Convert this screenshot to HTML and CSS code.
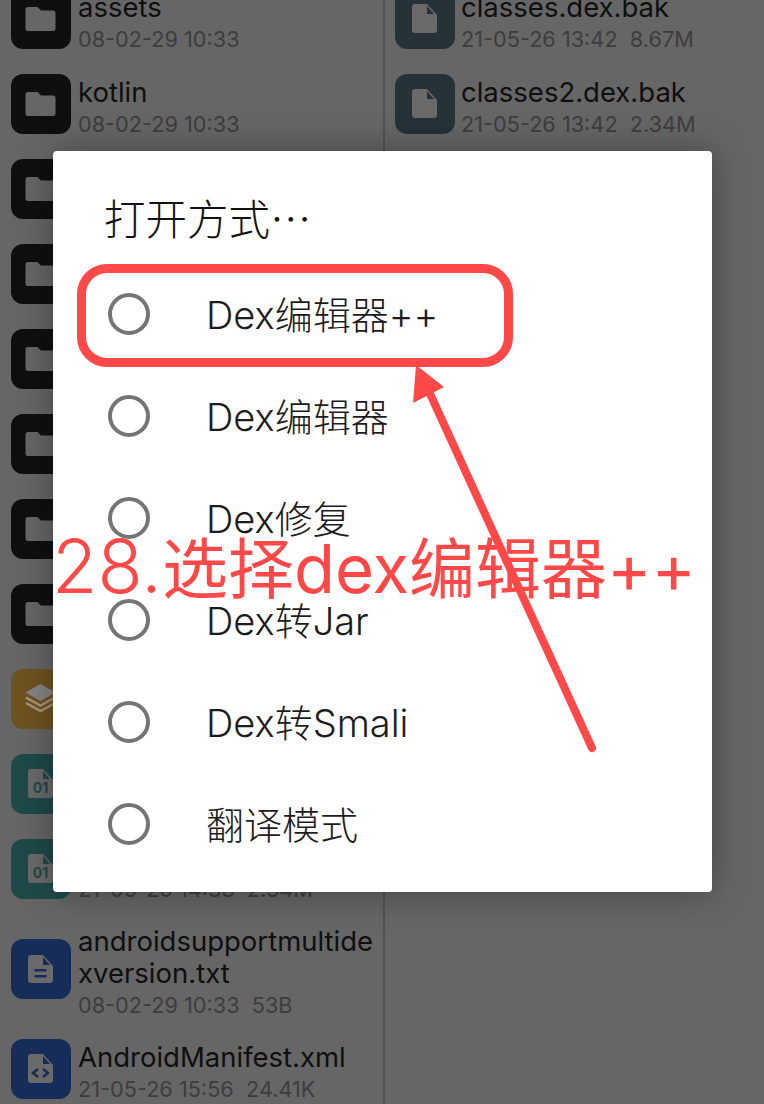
FILE: index.html
```html
<!DOCTYPE html>
<html lang="zh">
<head>
<meta charset="utf-8">
<title>打开方式</title>
<link rel="stylesheet" href="styles.css">
</head>
<body>
<svg class="defs" width="0" height="0" aria-hidden="true">
  <symbol id="folder" viewBox="0 0 60 60"><path d="M17 18h9.500l3.500 3.500h12a2.500 2.500 0 0 1 2.500 2.500v15.500a2.500 2.500 0 0 1-2.500 2.500H17a2.500 2.500 0 0 1-2.500-2.500V20.500a2.500 2.500 0 0 1 2.500-2.500z"/></symbol>
</svg>
<main class="browser">
  <section class="col col-left">
    <div class="row"><span class="icon i-folder"><svg><use href="#folder"/></svg></span><div class="info"><div class="name">assets</div><div class="meta">08-02-29 10:33</div></div></div>
    <div class="row"><span class="icon i-folder"><svg><use href="#folder"/></svg></span><div class="info"><div class="name">kotlin</div><div class="meta">08-02-29 10:33</div></div></div>
    <div class="row"><span class="icon i-folder"><svg><use href="#folder"/></svg></span><div class="info"><div class="name">lib</div><div class="meta">08-02-29 10:33</div></div></div>
    <div class="row"><span class="icon i-folder"><svg><use href="#folder"/></svg></span><div class="info"><div class="name">META-INF</div><div class="meta">08-02-29 10:33</div></div></div>
    <div class="row"><span class="icon i-folder"><svg><use href="#folder"/></svg></span><div class="info"><div class="name">okhttp3</div><div class="meta">08-02-29 10:33</div></div></div>
    <div class="row"><span class="icon i-folder"><svg><use href="#folder"/></svg></span><div class="info"><div class="name">org</div><div class="meta">08-02-29 10:33</div></div></div>
    <div class="row"><span class="icon i-folder"><svg><use href="#folder"/></svg></span><div class="info"><div class="name">res</div><div class="meta">08-02-29 10:33</div></div></div>
    <div class="row"><span class="icon i-folder"><svg><use href="#folder"/></svg></span><div class="info"><div class="name">retrofit2</div><div class="meta">08-02-29 10:33</div></div></div>
    <div class="row"><span class="icon i-stack"><svg viewBox="0 0 60 60"><path class="s-top" d="M29.500 15l15 8.500-15 8.500-15-8.500z"/><path class="s-line" d="M15 28.500l14.500 8 14.500-8M15 34l14.500 8 14.500-8"/></svg></span><div class="info"><div class="name">resources.arsc</div><div class="meta">21-05-26 14:38&nbsp; 3.12M</div></div></div>
    <div class="row"><span class="icon i-dex"><svg viewBox="0 0 60 60"><path class="g" d="M20 15h12l10 11v15a3 3 0 0 1-3 3H20a3 3 0 0 1-3-3V18a3 3 0 0 1 3-3z"/><path class="d" d="M32 17v8h7z"/></svg><b class="bin">01</b></span><div class="info"><div class="name">classes.dex</div><div class="meta">21-05-26 14:38&nbsp; 8.67M</div></div></div>
    <div class="row"><span class="icon i-dex"><svg viewBox="0 0 60 60"><path class="g" d="M20 15h12l10 11v15a3 3 0 0 1-3 3H20a3 3 0 0 1-3-3V18a3 3 0 0 1 3-3z"/><path class="d" d="M32 17v8h7z"/></svg><b class="bin">01</b></span><div class="info"><div class="name">classes2.dex</div><div class="meta">21-05-26 14:38&nbsp; 2.34M</div></div></div>
    <div class="row row-tall"><span class="icon i-doc"><svg viewBox="0 0 60 60"><path class="g" d="M20 16h12l10 11v14a3 3 0 0 1-3 3H20a3 3 0 0 1-3-3V19a3 3 0 0 1 3-3z"/><path class="d" d="M32 18v8h7zM23.500 30h12v2.500h-12zM23.500 36h12v2.500h-12z"/></svg></span><div class="info"><div class="name">androidsupportmultidexversion.txt</div><div class="meta">08-02-29 10:33&nbsp; 53B</div></div></div>
    <div class="row"><span class="icon i-doc"><svg viewBox="0 0 60 60"><path class="g" d="M20 15h12l10 11v15a3 3 0 0 1-3 3H20a3 3 0 0 1-3-3V18a3 3 0 0 1 3-3z"/><path class="d" d="M32 17v8h7z"/><path class="c" d="M27 30l-5 4 5 4M32 30l5 4-5 4"/></svg></span><div class="info"><div class="name">AndroidManifest.xml</div><div class="meta">21-05-26 15:56&nbsp; 24.41K</div></div></div>
  </section>
  <section class="col col-right">
    <div class="row"><span class="icon i-bak"><svg viewBox="0 0 60 60"><path class="g" d="M20 15h12l10 11v15a3 3 0 0 1-3 3H20a3 3 0 0 1-3-3V18a3 3 0 0 1 3-3z"/><path class="d" d="M32 17v8h7z"/></svg></span><div class="info"><div class="name">classes.dex.bak</div><div class="meta">21-05-26 13:42&nbsp; 8.67M</div></div></div>
    <div class="row"><span class="icon i-bak"><svg viewBox="0 0 60 60"><path class="g" d="M20 15h12l10 11v15a3 3 0 0 1-3 3H20a3 3 0 0 1-3-3V18a3 3 0 0 1 3-3z"/><path class="d" d="M32 17v8h7z"/></svg></span><div class="info"><div class="name">classes2.dex.bak</div><div class="meta">21-05-26 13:42&nbsp; 2.34M</div></div></div>
  </section>
</main>

<div class="dialog">
  <h1 class="dialog-title">打开方式…</h1>
  <ul class="options">
    <li class="option"><span class="radio"></span>Dex编辑器++</li>
    <li class="option"><span class="radio"></span>Dex编辑器</li>
    <li class="option"><span class="radio"></span>Dex修复</li>
    <li class="option"><span class="radio"></span>Dex转Jar</li>
    <li class="option"><span class="radio"></span>Dex转Smali</li>
    <li class="option"><span class="radio"></span>翻译模式</li>
  </ul>
</div>

<div class="mark-box"></div>
<svg class="mark-arrow" viewBox="0 0 764 1104"><path class="shaft" d="M592 748L426 385"/><path class="head" d="M416 365l-3 38 31-16z"/></svg>
<div class="caption"><span class="cap-num">28.</span>选择<span class="cap-latin">dex</span>编辑器<span class="cap-latin">++</span></div>
</body>
</html>
```

FILE: styles.css
```css
* { box-sizing: border-box; }
html, body { margin: 0; height: 100%; }
body {
  position: relative;
  width: 764px;
  height: 1104px;
  overflow: hidden;
  background: #666;
  font-family: Inter, "Noto Sans CJK SC", sans-serif;
}
.defs { position: absolute; }
.browser { display: flex; align-items: flex-start; height: 1104px; overflow: hidden; }
.col { margin-top: -23.5px; height: 1128px; }
.col-left { flex: none; width: 385px; border-right: 2px solid #525252; }
.col-right { flex: 1; }
.row { display: flex; align-items: center; height: 85px; padding: 0 8px 0 11px; gap: 7px; }
.row-tall { height: 115px; }
.col-right .row { padding-left: 10px; gap: 6px; }
.icon { position: relative; flex: none; width: 60px; height: 60px; border-radius: 12px; display: block; }
.icon svg { display: block; width: 60px; height: 60px; fill: #666; }
.i-folder { background: #0f0f0f; }
.i-bak { background: #263238; --ink: #263238; }
.i-stack { background: #6e5320; }
.i-dex { background: #1f4a49; --ink: #1f4a49; }
.i-doc { background: #152d58; --ink: #152d58; }
.i-stack .s-top { fill: #858585; }
.i-stack .s-line { fill: none; stroke: #a8957a; stroke-width: 2.500; }
.g { fill: #6a6a6a; }
.d { fill: var(--ink); }
.c { fill: none; stroke: var(--ink); stroke-width: 2.500; }
.bin { position: absolute; left: 0; right: 1px; top: 26px; text-align: center; font-size: 14px; line-height: 16px; color: var(--ink); }
.info { min-width: 0; padding-top: 7px; }
.name { font-size: 27.5px; line-height: 32px; color: #0f0f0f; word-break: break-all; }
.meta { font-size: 21.7px; line-height: 32px; color: #3d3d3d; white-space: pre; }

.dialog {
  position: absolute;
  left: 53px;
  top: 151px;
  width: 659px;
  height: 741px;
  padding: 41px 0 0 55px;
  background: #fff;
  border-radius: 4px;
  box-shadow: 0 0 36px rgba(0, 0, 0, .35);
}
.dialog-title { margin: 0 0 21px -4px; font-family: "Noto Sans CJK SC", sans-serif; font-size: 41.5px; line-height: 50px; font-weight: 300; color: #111; }
.options { list-style: none; margin: 0; padding: 0; }
.option { display: flex; align-items: center; height: 102px; padding-bottom: 4px; font-size: 38px; font-weight: 300; color: #1c1c1c; }
.radio { flex: none; width: 42px; height: 42px; margin: 4px 56px 0 0; border: 4px solid #757575; border-radius: 50%; }

.mark-box {
  position: absolute;
  left: 77px;
  top: 264px;
  width: 436px;
  height: 103px;
  border: 9px solid #ff4848;
  border-radius: 30px;
}
.mark-arrow { position: absolute; left: 0; top: 0; width: 764px; height: 1104px; }
.shaft { fill: none; stroke: #ff4848; stroke-width: 8; stroke-linecap: round; }
.head { fill: #ff4848; }
.caption {
  position: absolute;
  left: 52px;
  top: 522px;
  font-size: 66px;
  line-height: 88px;
  color: #ff4848;
  white-space: nowrap;
}
.cap-num { font-size: 74px; font-weight: 300; }
.cap-latin { font-size: 67px; }
```
